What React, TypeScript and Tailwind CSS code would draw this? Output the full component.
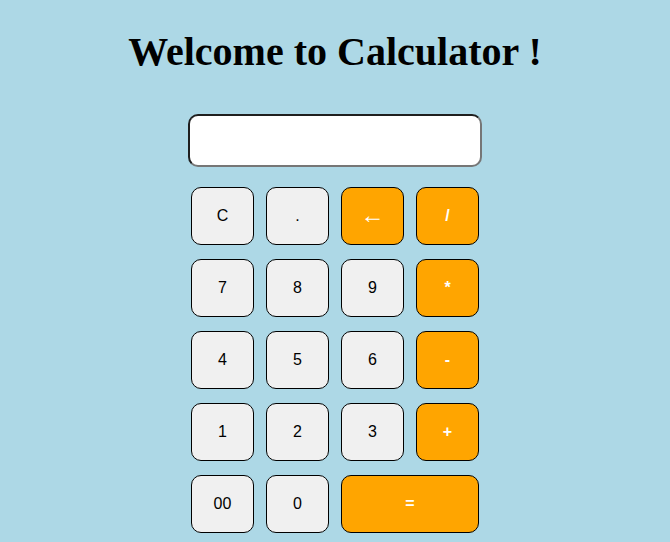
import React, { useState } from "react";

const keys: { label: string; kind: "num" | "op"; wide?: boolean }[] = [
  { label: "C", kind: "num" },
  { label: ".", kind: "num" },
  { label: "←", kind: "op" },
  { label: "/", kind: "op" },
  { label: "7", kind: "num" },
  { label: "8", kind: "num" },
  { label: "9", kind: "num" },
  { label: "*", kind: "op" },
  { label: "4", kind: "num" },
  { label: "5", kind: "num" },
  { label: "6", kind: "num" },
  { label: "-", kind: "op" },
  { label: "1", kind: "num" },
  { label: "2", kind: "num" },
  { label: "3", kind: "num" },
  { label: "+", kind: "op" },
  { label: "00", kind: "num" },
  { label: "0", kind: "num" },
  { label: "=", kind: "op", wide: true },
];

const App: React.FC = () => {
  const [value, setValue] = useState("");

  const press = (k: string) => {
    if (k === "C") return setValue("");
    if (k === "←") return setValue((v) => v.slice(0, -1));
    if (k === "=") {
      try {
        // eslint-disable-next-line no-new-func
        setValue(String(Function(`return (${value})`)()));
      } catch {
        setValue("Error");
      }
      return;
    }
    setValue((v) => v + k);
  };

  return (
    <div className="min-h-screen bg-[#add8e6] flex flex-col items-center pt-[29px] font-['Liberation_Sans',Arial,sans-serif]">
      {/* Title */}
      <h1 className="font-['Liberation_Serif','Times_New_Roman',serif] font-bold text-[40px] leading-[46px] text-black text-center">
        Welcome to Calculator !
      </h1>

      {/* Display */}
      <input
        type="text"
        value={value}
        readOnly
        className="mt-[39px] w-[294px] h-[53px] rounded-[10px] bg-white border-2 border-t-[#1f1f1f] border-l-[#1f1f1f] border-b-[#767676] border-r-[#767676] px-3 text-right text-2xl outline-none"
      />

      {/* Keys */}
      <div className="mt-[20px] grid grid-cols-[repeat(4,63px)] auto-rows-[58px] gap-x-[12px] gap-y-[14px]">
        {keys.map((k) => (
          <button
            key={k.label}
            onClick={() => press(k.label)}
            className={
              k.kind === "op"
                ? `${k.wide ? "col-span-2" : ""} rounded-[10px] border border-black bg-[#ffa500] text-white font-bold text-base`
                : "rounded-[10px] border border-black bg-[#f0f0f0] text-black text-base"
            }
          >
            {k.label === "←" ? <span className="text-[24px] font-normal leading-none">←</span> : k.label}
          </button>
        ))}
      </div>
    </div>
  );
};

export default App;
